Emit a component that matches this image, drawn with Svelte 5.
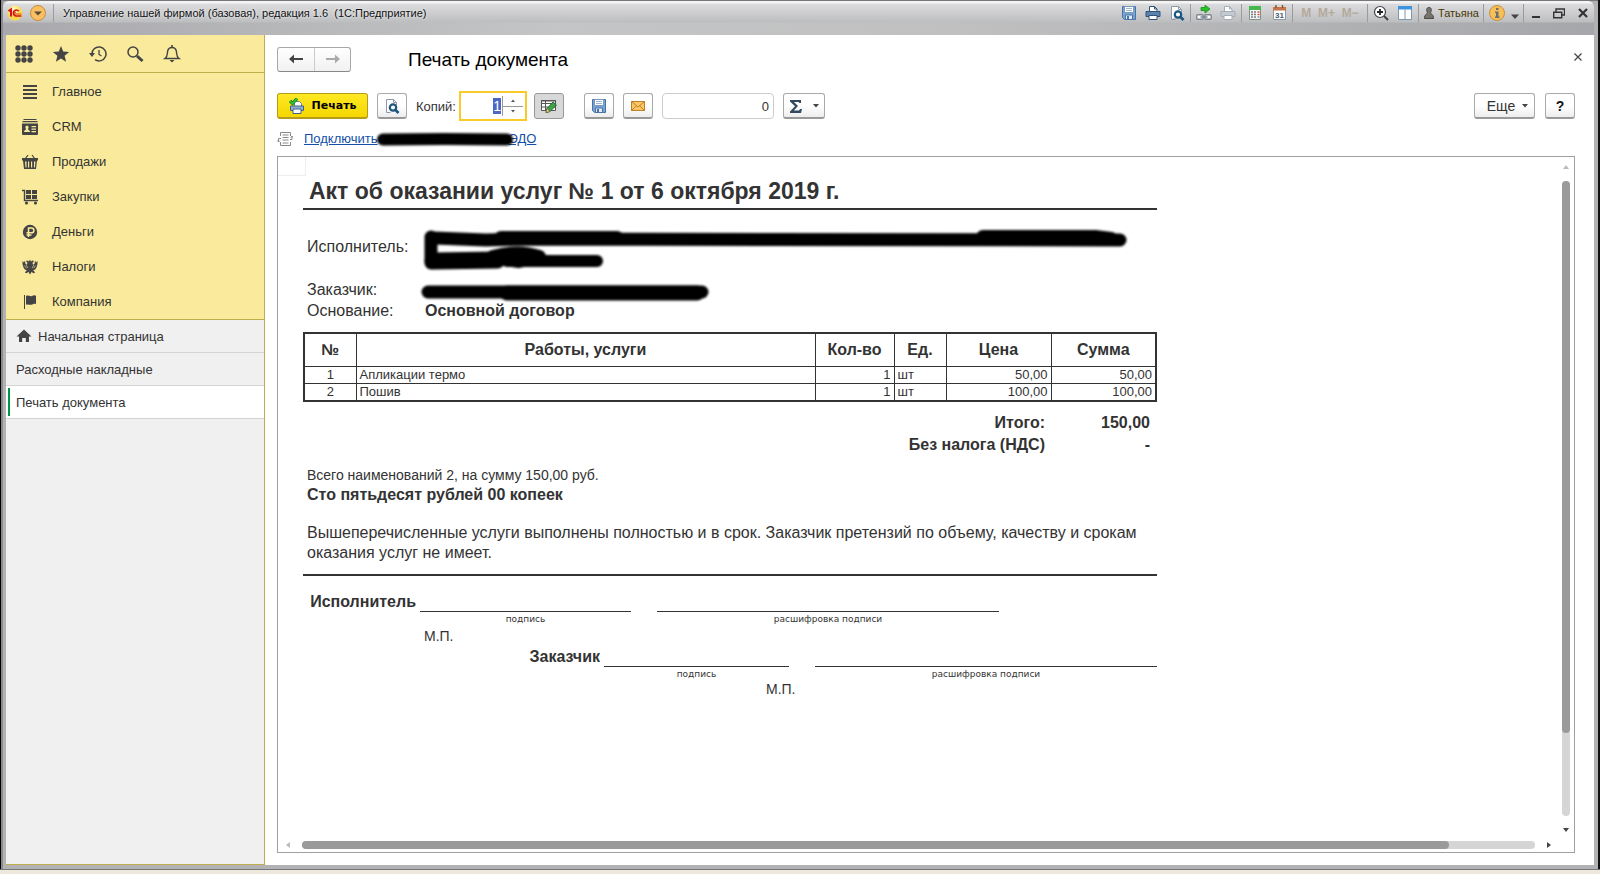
<script>
	import { onMount } from 'svelte';

	let copies = $state(1);
	let total = $state('0');
	let copiesInput;

	const sections = [
		{ id: 'main', label: 'Главное' },
		{ id: 'crm', label: 'CRM' },
		{ id: 'sales', label: 'Продажи' },
		{ id: 'purchases', label: 'Закупки' },
		{ id: 'money', label: 'Деньги' },
		{ id: 'taxes', label: 'Налоги' },
		{ id: 'company', label: 'Компания' }
	];

	const rows = [
		{ name: 'Апликации термо', qty: '1', unit: 'шт', price: '50,00', sum: '50,00' },
		{ name: 'Пошив', qty: '1', unit: 'шт', price: '100,00', sum: '100,00' }
	];

	onMount(() => {
		copiesInput.focus();
		copiesInput.select();
	});
</script>

{#snippet floppy()}
	<svg width="16" height="16" viewBox="0 0 16 16">
		<path d="M1.5 1.5h13v13h-11l-2-2z" fill="#7ba3cf" stroke="#4674a8" />
		<path d="M3.5 1.5h9v6h-9z" fill="#fff" stroke="#7598bd" />
		<path d="M5 3.5h6M5 5.5h6" stroke="#9fb4ca" />
		<path d="M4.5 10h7v4.5h-7z" fill="#e4edf6" stroke="#4674a8" />
		<path d="M6 11h2v3H6z" fill="#4674a8" />
	</svg>
{/snippet}

{#snippet preview()}
	<svg width="16" height="16" viewBox="0 0 16 16">
		<path d="M2.5 14.5v-13h7l3 3v3M2.5 14.5h4" fill="#fff" stroke="#8a9aab" />
		<path d="M9.5 1.5v3h3" fill="none" stroke="#8a9aab" />
		<circle cx="9" cy="9.5" r="3.2" fill="#fff" stroke="#1c5580" stroke-width="2.2" />
		<path d="M11.5 12l3 3" stroke="#1c5580" stroke-width="2.6" />
	</svg>
{/snippet}

{#snippet printer(body, edge)}
	<svg width="16" height="16" viewBox="0 0 16 16">
		<path d="M4.5 7V1.5h5l2.500 2.500v3" fill="#fff" stroke={edge} />
		<path d="M9.5 1.5V4H12" fill="none" stroke={edge} />
		<path d="M1 6.5h14v5H1z" fill={body} stroke={edge} />
		<path d="M4 10.5h8v4H4z" fill="#fff" stroke={edge} />
	</svg>
{/snippet}

<div class="window">
	<header class="titlebar">
		<div class="caption">
			<svg width="16" height="16" viewBox="0 0 16 16">
				<defs>
					<radialGradient id="logoFill" cx="40%" cy="25%">
						<stop offset="0" stop-color="#fff9c8" />
						<stop offset="1" stop-color="#fbd94a" />
					</radialGradient>
				</defs>
				<circle cx="8" cy="8" r="7.5" fill="url(#logoFill)" />
				<path d="M1.5 6.200L4 4.500V11.500" fill="none" stroke="#d4151b" stroke-width="2" />
				<path d="M11.800 6.300A3 3 0 1 0 9 11H14.500" fill="none" stroke="#d4151b" stroke-width="1.600" />
				<path d="M9 7.200a1 1 0 1 0 0 1.800H14.500" fill="none" stroke="#d4151b" stroke-width=".8" />
			</svg>
			<button aria-label="Главное меню">
				<svg width="16" height="16" viewBox="0 0 16 16">
					<circle cx="8" cy="8" r="7.5" fill="#f9bf62" stroke="#c58d3c" />
					<path d="M4 6.5h8l-4 4z" fill="#5a4a35" />
				</svg>
			</button>
			<span class="divider"></span>
			<span class="caption-text">Управление нашей фирмой (базовая), редакция 1.6&nbsp; (1С:Предприятие)</span>
		</div>
		<div class="sys">
			<div class="group">
				<button aria-label="Сохранить">{@render floppy()}</button>
				<button aria-label="Печать">{@render printer('#5b83ad', '#2f5278')}</button>
				<button aria-label="Просмотр">{@render preview()}</button>
			</div>
			<div class="group">
				<button aria-label="Получить ссылку">
					<svg width="16" height="16" viewBox="0 0 16 16">
						<path d="M5 2.5h4V0l5 4-5 4V5.5H5z" fill="#25c425" stroke="#128212" stroke-width=".7" />
						<rect x=".8" y="9.8" width="6.4" height="4.4" rx="1" fill="#fff" stroke="#7d8790" stroke-width="1.4" />
						<rect x="8.8" y="9.8" width="6.4" height="4.4" rx="1" fill="#fff" stroke="#7d8790" stroke-width="1.4" />
						<path d="M4.5 12h7" stroke="#7d8790" stroke-width="1.5" />
					</svg>
				</button>
				<button aria-label="Перейти по ссылке">{@render printer('#c3cad2', '#a3adb8')}</button>
			</div>
			<div class="group">
				<button aria-label="Калькулятор">
					<svg width="16" height="16" viewBox="0 0 16 16">
						<path d="M2.5 1.5h11v13h-11z" fill="#f6f8f6" stroke="#849084" />
						<path d="M2 1h12v4H2z" fill="#45b84d" />
						<path d="M4 7h2M7 7h2M4 9.5h2M7 9.5h2M4 12h2M7 12h2" stroke="#778" stroke-width="1.3" />
						<path d="M10.5 7h2M10.5 9.5h2" stroke="#e0483b" stroke-width="1.3" />
						<path d="M10.5 12h2" stroke="#778" stroke-width="1.3" />
					</svg>
				</button>
				<button aria-label="Календарь">
					<svg width="16" height="16" viewBox="0 0 16 16">
						<path d="M2.5 2.5h12v12h-12z" fill="#fff" stroke="#8b98a6" />
						<path d="M2 2h13v3.5H2z" fill="#c4764a" />
						<path d="M5 0v3M11.5 0v3" stroke="#8c4b28" stroke-width="1.4" />
						<text x="4" y="13" font-size="8" font-family="Liberation Sans, sans-serif" font-weight="bold" fill="#4b5968">31</text>
					</svg>
				</button>
			</div>
			<div class="group memory">
				<button disabled>M</button>
				<button disabled>M+</button>
				<button disabled>M−</button>
			</div>
			<div class="group">
				<button aria-label="Масштаб">
					<svg width="16" height="16" viewBox="0 0 16 16">
						<circle cx="7" cy="7" r="5.5" fill="#fff" stroke="#3d4247" stroke-width="1.2" />
						<path d="M7 4v6M4 7h6" stroke="#22262a" stroke-width="1.8" />
						<path d="M11 11l4 4" stroke="#3d4247" stroke-width="2" />
					</svg>
				</button>
				<button aria-label="Панели">
					<svg width="16" height="16" viewBox="0 0 16 16">
						<path d="M1.5 1.5h13v13h-13z" fill="#fff" stroke="#7f98ae" />
						<path d="M1 1h14v3.5H1z" fill="#3f95dd" />
						<path d="M8 4.5V14" stroke="#7f98ae" />
					</svg>
				</button>
			</div>
			<div class="group user">
				<svg width="10" height="12" viewBox="0 0 10 12">
					<path d="M5 .5c3 0 2.600 3.500 1.500 5.200C6.800 7.200 9.500 7 9.500 11.500h-9C.5 7 3.200 7.200 3.500 5.700 2.400 4 2 .5 5 .5z" fill="#77736f" stroke="#4b4845" />
				</svg>
				<span>Татьяна</span>
			</div>
			<div class="group info">
				<button aria-label="О программе">
					<svg width="16" height="16" viewBox="0 0 16 16">
						<circle cx="8" cy="8" r="7.5" fill="#f7bf56" stroke="#c69239" />
						<path d="M7 3h2.500v2H7zM6 6.500h3.500v5h1V13H6v-1.500h1V8H6z" fill="#6b7076" />
					</svg>
				</button>
				<button aria-label="Дополнительно">
					<svg width="8" height="16" viewBox="0 0 8 16"><path d="M0 9.500h8l-4 4.500z" fill="#444" /></svg>
				</button>
			</div>
			<div class="group controls">
				<button aria-label="Свернуть">
					<svg width="8" height="12" viewBox="0 0 8 12"><path d="M0 10h8" stroke="#333" stroke-width="2" /></svg>
				</button>
				<button aria-label="Восстановить">
					<svg width="12" height="12" viewBox="0 0 12 12">
						<path d="M3 5V2h8.500v6H9" fill="none" stroke="#333" stroke-width="1.4" />
						<path d="M.7 5.200h8v5.500h-8z" fill="none" stroke="#333" stroke-width="1.4" />
					</svg>
				</button>
				<button aria-label="Закрыть">
					<svg width="10" height="12" viewBox="0 0 10 12"><path d="M1 2l8 8M9 2l-8 8" stroke="#333" stroke-width="2.2" /></svg>
				</button>
			</div>
		</div>
	</header>

	<div class="workspace">
		<aside class="sidebar">
			<div class="quick">
				<button aria-label="Меню функций">
					<svg width="18" height="18" viewBox="0 0 18 18" fill="#444">
						{#each [3, 9, 15] as y}
							{#each [3, 9, 15] as x}
								<circle cx={x} cy={y} r="2.7" />
							{/each}
						{/each}
					</svg>
				</button>
				<button aria-label="Избранное">
					<svg width="18" height="18" viewBox="0 0 18 18"><path d="M9 1l2.200 5.600 6 .4-4.600 3.800 1.500 5.900L9 13.400l-5.100 3.300 1.500-5.900L.8 7l6-.4z" fill="#444" /></svg>
				</button>
				<button aria-label="История">
					<svg width="18" height="18" viewBox="0 0 18 18">
						<path d="M3 9.500A7 7 0 1 1 6 14.700" fill="none" stroke="#444" stroke-width="1.5" />
						<path d="M0 8h6l-3 4z" fill="#444" />
						<path d="M10 5v4.500l2.500 1.500" fill="none" stroke="#444" stroke-width="1.3" />
					</svg>
				</button>
				<button aria-label="Поиск">
					<svg width="18" height="18" viewBox="0 0 18 18">
						<circle cx="7" cy="7" r="5" fill="none" stroke="#444" stroke-width="1.5" />
						<path d="M11 11l5.500 5" stroke="#444" stroke-width="3" />
					</svg>
				</button>
				<button aria-label="Оповещения">
					<svg width="18" height="18" viewBox="0 0 18 18">
						<path d="M2 13.500c3-2 2-5 2.800-8C5.500 3 7.500 2.500 9 2.500s3.500.5 4.200 3c.8 3-.2 6 2.800 8z" fill="none" stroke="#444" stroke-width="1.4" />
						<path d="M9 0v3" stroke="#444" stroke-width="1.6" />
						<path d="M6.500 15h5L9 17.500z" fill="#444" />
					</svg>
				</button>
			</div>

			<nav class="sections">
				{#each sections as section}
					<a href="#{section.id}">
						<svg width="18" height="18" viewBox="0 0 18 18" fill="#444">
							{#if section.id === 'main'}
								<path d="M2 2h14v2H2zM2 6h14v2H2zM2 10h14v2H2zM2 14h14v2H2z" />
							{:else if section.id === 'crm'}
								<path d="M2.500 1h13v1h-13zM1.500 3h15v1.200h-15z" />
								<path fill-rule="evenodd" d="M1 5.500h16V16q0 1-1 1H2q-1 0-1-1zM3 14h6c0-2-2-1.800-2-3 1-1.200.8-3.500-1-3.500S4 9.800 5 11c0 1.200-2 1-2 3zM10.500 8v1.300H15V8zM10.500 10.500v1.300H15v-1.300zM10.500 13v1.200H15V13z" />
							{:else if section.id === 'sales'}
								<path d="M4 6l3-4M14 6l-3-4" fill="none" stroke="#444" stroke-width="1.2" />
								<path fill-rule="evenodd" d="M1 5h16v2.500h-1L15 16H3L2 7.500H1zM4 8.500l.5 6h1v-6zM7 8.500v6h1.200v-6zM10 8.500v6h1.200v-6zM13 8.500v6h1l.4-6z" />
							{:else if section.id === 'purchases'}
								<path d="M1 2.500h2.500v10H17" fill="none" stroke="#444" stroke-width="1.4" />
								<path d="M5 2h5v4H5zM11 2h5v4h-5zM5 7h5v4H5zM11 7h5v4h-5z" />
								<circle cx="5.5" cy="15" r="1.6" /><circle cx="14.5" cy="15" r="1.6" />
							{:else if section.id === 'money'}
								<circle cx="9" cy="9" r="7.2" />
								<path d="M7.500 14V5h3a2.300 2.300 0 0 1 0 4.800H5.500M5.500 12h5" fill="none" stroke="#faeb9c" stroke-width="1.5" />
							{:else if section.id === 'taxes'}
								<path d="M9 1.500l1 2 2-1.200.8 1.500-1.300 1 .5 2L13.500 6l.5-3.500 1 2L16.500 3v3l-.8 3-1.500 2.500-2 .8 2 2.200-2 .8-1.500-1.500L9 16.500l-1.700-2.700-1.500 1.500-2-.8 2-2.200-2-.8L2.300 9l-.8-3V3L3 4.500l1-2L4.500 6 6 6.800l.5-2-1.300-1L6 2.300l2 1.200z" />
								<path d="M5 7l2 3M13 7l-2 3M3.300 7.500l2.200 2.800M14.700 7.500l-2.200 2.800" stroke="#faeb9c" stroke-width=".6" />
							{:else}
								<path d="M3 2h1v14H3z" />
								<path d="M5 3c2-1.500 4 .8 6 0 1.500-1 3-.6 4-.2v8.400c-2-1-3 .2-4.500.6-2 .4-3.500-1-5.500 0z" />
							{/if}
						</svg>
						{section.label}
					</a>
				{/each}
			</nav>

			<nav class="opened">
				<a href="#home">
					<svg width="16" height="16" viewBox="0 0 16 16"><path d="M8 1.500l7.500 7H13V14H9.800v-4H6.200v4H3V8.500H.5z" fill="#444" /></svg>
					Начальная страница
				</a>
				<a href="#invoices">Расходные накладные</a>
				<a href="#print" class="active">Печать документа</a>
			</nav>
		</aside>

		<main class="page">
			<div class="head">
				<div class="history">
					<button aria-label="Назад">
						<svg width="16" height="12" viewBox="0 0 16 12"><path d="M1 6l5-4.500V5h9v2H6v3.500z" fill="#444" /></svg>
					</button>
					<button aria-label="Вперед">
						<svg width="16" height="12" viewBox="0 0 16 12"><path d="M15 6l-5-4.500V5H1v2h9v3.500z" fill="#aaa" /></svg>
					</button>
				</div>
				<h1>Печать документа</h1>
				<button class="close" aria-label="Закрыть">
					<svg width="8" height="8" viewBox="0 0 8 8"><path d="M.5.5l7 7M7.500.5l-7 7" stroke="#444" stroke-width="1.2" /></svg>
				</button>
			</div>

			<div class="toolbar">
				<button class="btn primary">
					<svg width="16" height="16" viewBox="0 0 16 16">
						<path d="M5.500 8V3.500h5l2 2V8" fill="#fff" stroke="#6d8296" />
						<path d="M1.500 8h13v4.500h-13z" fill="#8fb0d0" stroke="#3f6288" />
						<path d="M4 11h8v4.500H4z" fill="#fff" stroke="#3f6288" />
						<path d="M1 3l2.500 2.500L8 .5" fill="none" stroke="#16831a" stroke-width="3.2" />
						<path d="M1 3l2.500 2.500L8 .5" fill="none" stroke="#35c43a" stroke-width="1.6" />
					</svg>
					Печать
				</button>
				<button class="btn icon" aria-label="Предварительный просмотр">{@render preview()}</button>
				<label for="copies">Копий:</label>
				<div class="spin">
					<input id="copies" type="number" bind:value={copies} bind:this={copiesInput} />
					<div class="steps">
						<button aria-label="Больше" onclick={() => copies++}>
							<svg width="4" height="3" viewBox="0 0 4 3"><path d="M0 3h4L2 .5z" fill="#555" /></svg>
						</button>
						<button aria-label="Меньше" onclick={() => copies--}>
							<svg width="4" height="3" viewBox="0 0 4 3"><path d="M0 0h4L2 2.500z" fill="#555" /></svg>
						</button>
					</div>
				</div>
				<button class="btn icon pressed" aria-label="Редактирование">
					<svg width="18" height="16" viewBox="0 0 18 16">
						<path d="M1.500 2.500h14v10h-14z" fill="#fff" stroke="#555" />
						<path d="M1 5.500h15M1 9h15M5.500 2v10.500" stroke="#555" />
						<path d="M1 2h15v1.500H1z" fill="#555" />
						<path d="M6 14.500l1-4 6-6.500 3.500 3-6.500 6.500z" fill="#43a047" stroke="#1f6f2a" />
						<path d="M6 14.500l1-4 3 3z" fill="#f4d9a8" stroke="#6d5a35" stroke-width=".7" />
					</svg>
				</button>
				<button class="btn icon spaced" aria-label="Сохранить">{@render floppy()}</button>
				<button class="btn icon" aria-label="Отправить">
					<svg width="16" height="16" viewBox="0 0 16 16">
						<path d="M1.500 3.500h13v9h-13z" fill="#fbc766" stroke="#c17f26" />
						<path d="M1.500 3.500L8 9l6.500-5.500M1.500 12.500l5-4.800M14.500 12.500l-5-4.800" fill="none" stroke="#c17f26" />
					</svg>
				</button>
				<input class="total" aria-label="Сумма" bind:value={total} />
				<button class="btn sigma" aria-label="Сумма">
					<svg width="14" height="14" viewBox="0 0 14 14"><path d="M1 1h11v3h-1.500L9.500 3H5l4 4-4.200 4.500H10l1.200-1.500H13L12 14H1v-1.500L6 7.300 1 2.500z" fill="#34495e" /></svg>
					<svg width="6" height="4" viewBox="0 0 6 4"><path d="M0 0h6L3 3.500z" fill="#444" /></svg>
				</button>
				<button class="btn more">
					Еще
					<svg width="6" height="4" viewBox="0 0 6 4"><path d="M0 0h6L3 3.500z" fill="#444" /></svg>
				</button>
				<button class="btn icon help">?</button>
			</div>

			<div class="edo">
				<svg width="16" height="16" viewBox="0 0 16 16" fill="none" stroke="#8a8a8a">
					<path d="M3.500 5V1.500h10V5M3.500 11v3.500h10V11" />
					<path d="M5.500 4h6M5.500 6.500h6M5.500 9h6M5.500 12h6" />
					<path d="M4 7.500H1.500V11M.2 9.500L1.500 11 3 9.500M13 8.500h2V5M13.700 6.500L15 5l1 1.500" />
				</svg>
				<a href="#edo">Подключить<svg class="mark" width="138" height="14" viewBox="0 0 138 14">
					<path d="M7 7.500q62-1 124 0" fill="none" stroke="#000" stroke-width="12" stroke-linecap="round" />
				</svg>ЭДО</a>
			</div>

			<div class="viewer">
				<div class="canvas">
					<div class="cell"></div>
					<article class="sheet">
						<h2>Акт об оказании услуг № 1 от 6 октября 2019 г.</h2>

						<dl>
							<dt class="tall">Исполнитель:</dt>
							<dd></dd>
							<dt>Заказчик:</dt>
							<dd></dd>
							<dt>Основание:</dt>
							<dd>Основной договор</dd>
							<svg class="ink" width="720" height="84" viewBox="0 0 720 84" aria-hidden="true">
								<g fill="none" stroke="#000" stroke-linecap="round" stroke-linejoin="round">
									<path d="M17 18l52 2 40-1 594 1" stroke-width="13" />
									<path d="M84 18h116M566 17h112l16 2" stroke-width="14" />
									<path d="M14 17v26" stroke-width="13" />
									<path d="M16 41l64-1" stroke-width="17" />
									<path d="M76 37q25-7 46 0l-20 4z" stroke-width="14" fill="#000" />
									<path d="M90 41h90" stroke-width="12" />
									<path d="M11 72h274" stroke-width="13" />
									<path d="M90 73h190" stroke-width="15" />
								</g>
							</svg>
						</dl>

						<table>
							<thead>
								<tr>
									<th class="num">№</th>
									<th>Работы, услуги</th>
									<th class="qty">Кол-во</th>
									<th class="unit">Ед.</th>
									<th class="money">Цена</th>
									<th class="money">Сумма</th>
								</tr>
							</thead>
							<tbody>
								{#each rows as row, i}
									<tr>
										<td class="center">{i + 1}</td>
										<td>{row.name}</td>
										<td class="right">{row.qty}</td>
										<td>{row.unit}</td>
										<td class="right">{row.price}</td>
										<td class="right">{row.sum}</td>
									</tr>
								{/each}
							</tbody>
						</table>

						<div class="totals">
							<span>Итого:</span><span>150,00</span>
							<span>Без налога (НДС)</span><span>-</span>
						</div>

						<p class="count">Всего наименований 2, на сумму 150,00 руб.</p>
						<p class="words">Сто пятьдесят рублей 00 копеек</p>
						<p class="claim">Вышеперечисленные услуги выполнены полностью и в срок. Заказчик претензий по объему, качеству и срокам оказания услуг не имеет.</p>

						<div class="sign">
							<strong>Исполнитель</strong>
							<div class="field">подпись</div>
							<div class="field name">расшифровка подписи</div>
							<span class="stamp">М.П.</span>
						</div>
						<div class="sign customer">
							<strong>Заказчик</strong>
							<div class="field">подпись</div>
							<div class="field name">расшифровка подписи</div>
							<span class="stamp">М.П.</span>
						</div>
					</article>
				</div>
				<div class="vbar">
					<svg width="8" height="6" viewBox="0 0 8 6"><path d="M1 5h6L4 1z" fill="#bbb" /></svg>
					<div class="track"><div class="thumb"></div></div>
					<svg width="8" height="6" viewBox="0 0 8 6"><path d="M1 1h6L4 5z" fill="#444" /></svg>
				</div>
				<div class="hbar">
					<svg width="6" height="8" viewBox="0 0 6 8"><path d="M5 1v6L1 4z" fill="#bbb" /></svg>
					<div class="track"><div class="thumb"></div></div>
					<svg width="6" height="8" viewBox="0 0 6 8"><path d="M1 1v6l4-3z" fill="#444" /></svg>
				</div>
			</div>
		</main>
	</div>
</div>

<style>
	:global(body) {
		background: #ece8dc;
	}

	.window {
		box-sizing: border-box;
		display: flex;
		flex-direction: column;
		min-height: calc(100vh - 4px);
		padding: 1px 6px 4px 6px;
		font-family: 'Liberation Sans', Arial, sans-serif;
		font-size: 13px;
		color: #333;
		background: #b2b2b5;
		border-bottom: 1px solid #77777a;
		box-shadow: inset 1px 0 #000, inset -2px 0 #111, inset 3px 0 #8b8b8e, inset 0 1px #777;
	}

	button {
		display: flex;
		align-items: center;
		justify-content: center;
		margin: 0;
		padding: 0;
		border: 0;
		background: none;
		font: inherit;
		color: inherit;
	}

	svg {
		display: block;
		flex: none;
	}

	a {
		color: inherit;
		text-decoration: none;
	}

	/* Title bar */
	.titlebar {
		display: flex;
		justify-content: space-between;
		height: 34px;
		margin-left: -3px;
		border-radius: 6px 6px 0 0;
		background:
			linear-gradient(#f4f4f4 0 2px, #dcdcde 3px, #bdbec0 21px, transparent 22px),
			linear-gradient(90deg, #a9a9ad, #c4c5c6 35%, #c0c0c1 60%, #a6a7aa);
		color: #111;
		font-size: 11px;
	}

	.caption,
	.sys {
		display: flex;
		align-items: center;
		height: 24px;
	}

	.caption {
		gap: 7px;
		padding-left: 4px;
	}

	.divider {
		width: 1px;
		height: 18px;
		background: #9b9b9d;
	}

	.caption-text {
		margin-left: 2px;
		white-space: pre;
		text-shadow: 0 0 3px #fff;
	}

	.group {
		box-sizing: border-box;
		display: flex;
		align-items: center;
		gap: 8px;
		height: 18px;
		padding: 0 5px;
		border-left: 1px solid #9b9b9d;
	}

	.group:first-child {
		border-left: 0;
	}

	.memory {
		width: 75px;
		justify-content: space-around;
		gap: 0;
		font-size: 12px;
		font-weight: bold;
	}

	.memory button {
		color: #b5a99d;
	}

	.user {
		gap: 4px;
		padding-right: 4px;
		color: #4a3600;
	}

	.info {
		gap: 6px;
		padding-right: 4px;
	}

	.controls {
		gap: 13px;
		padding: 0 6px 0 8px;
	}

	.workspace {
		display: flex;
		flex: 1;
		background: #fff;
	}

	/* Sidebar */
	.sidebar {
		box-sizing: border-box;
		flex: none;
		width: 259px;
		background: #f0f0f0;
		border-right: 1px solid #bfae4e;
		border-bottom: 1px solid #bfae4e;
	}

	.quick {
		display: flex;
		gap: 9px;
		height: 37px;
		padding-left: 4px;
		background: #faeb9c;
		border-bottom: 1px solid #bfae4e;
	}

	.quick button {
		width: 28px;
	}

	.sections {
		background: #faeb9c;
		border-bottom: 1px solid #bfae4e;
		padding-top: 1px;
	}

	.sections a {
		display: flex;
		align-items: center;
		gap: 13px;
		height: 35px;
		padding-left: 15px;
	}

	.opened a {
		display: flex;
		align-items: center;
		gap: 6px;
		height: 32px;
		padding-left: 10px;
		border-bottom: 1px solid #d4d4d4;
	}

	.opened .active {
		background:
			linear-gradient(#009646, #009646) 2px 2px / 2px 28px no-repeat,
			#fff;
	}

	/* Page */
	.page {
		display: flex;
		flex: 1;
		flex-direction: column;
		min-width: 0;
		padding: 12px 19px 12px 12px;
	}

	.head {
		display: flex;
		align-items: center;
		height: 24px;
	}

	.history {
		display: flex;
		box-sizing: border-box;
		height: 25px;
		border: 1px solid #a8a8a8;
		border-bottom-color: #888;
		border-radius: 3px;
		background: linear-gradient(#fff, #f1f1f1);
	}

	.history button {
		width: 36px;
	}

	.history button + button {
		border-left: 1px solid #ccc;
	}

	h1 {
		flex: 1;
		margin: 0 0 0 57px;
		padding-top: 2px;
		font-size: 19px;
		font-weight: normal;
		color: #000;
	}

	.close {
		width: 8px;
		margin: -4px -7px 0 0;
	}

	.toolbar {
		display: flex;
		align-items: center;
		gap: 9px;
		height: 30px;
		margin-top: 20px;
	}

	.btn {
		box-sizing: border-box;
		height: 26px;
		border: 1px solid #aaa;
		border-bottom: 2px solid #999;
		border-radius: 3px;
		background: linear-gradient(#fff 50%, #ededed);
	}

	.icon {
		width: 30px;
	}

	.primary {
		gap: 7px;
		width: 91px;
		border-color: #b69c1a;
		background: linear-gradient(#ffe924, #f5d700);
		font-family: 'DejaVu Sans', Verdana, sans-serif;
		font-size: 11px;
		font-weight: bold;
		color: #000;
	}

	.pressed {
		border-width: 1px;
		border-color: #999;
		background: #d8d8d8;
	}

	.toolbar label {
		width: 34px;
		white-space: nowrap;
	}

	.spin {
		box-sizing: border-box;
		display: flex;
		width: 68px;
		height: 30px;
		border: 2px solid #f9cb29;
	}

	.spin input {
		flex: 1;
		min-width: 0;
		margin: 4px 0;
		padding: 0;
		border: 0;
		outline: 0;
		font: 14px 'Liberation Sans', Arial, sans-serif;
		text-align: right;
		appearance: textfield;
	}

	.spin input::-webkit-inner-spin-button {
		display: none;
	}

	.spin input::selection {
		background: #4b66c4;
		color: #fff;
	}

	.steps {
		display: flex;
		flex-direction: column;
		width: 20px;
		margin: 3px 2px 3px 1px;
		border-left: 1px solid #999;
	}

	.steps button {
		flex: 1;
	}

	.steps button + button {
		border-top: 1px solid #999;
	}

	.pressed {
		margin-left: -2px;
	}

	.spaced {
		margin-left: 11px;
	}

	.total {
		box-sizing: border-box;
		width: 112px;
		height: 26px;
		padding: 0 4px;
		border: 1px solid #ccc;
		border-radius: 4px;
		font: inherit;
		color: #333;
		text-align: right;
	}

	.sigma {
		gap: 10px;
		width: 42px;
	}

	.more {
		gap: 7px;
		width: 61px;
		margin-left: auto;
		padding-left: 6px;
		font-size: 14px;
	}

	.help {
		margin-left: 1px;
		font-size: 14px;
		font-weight: bold;
		color: #111;
	}

	.edo {
		display: flex;
		align-items: center;
		gap: 11px;
		height: 35px;
	}

	.edo a {
		color: #1450a8;
		text-decoration: underline;
		white-space: nowrap;
	}

	.mark {
		display: inline-block;
		margin: 0 -5px 0 -2px;
		vertical-align: -3px;
		filter: blur(1px);
	}

	/* Document viewer */
	.viewer {
		display: grid;
		flex: 1;
		grid-template-columns: 1fr 14px;
		grid-template-rows: 1fr 14px;
		border: 1px solid #a0a0a0;
	}

	.canvas {
		min-width: 0;
	}

	.cell {
		width: 27px;
		height: 18px;
		border: solid #eee;
		border-width: 0 1px 1px 0;
	}

	.sheet {
		width: 854px;
		margin-left: 25px;
	}

	h2 {
		margin: 0;
		padding: 1px 0 2px 6px;
		border-bottom: 2px solid #333;
		font-size: 23px;
		line-height: 29px;
	}

	dl {
		position: relative;
		display: grid;
		grid-template-columns: 118px 1fr;
		grid-template-rows: 59px 20px 20px;
		row-gap: 1px;
		align-items: center;
		margin: 10px 0 11px;
		padding-left: 4px;
		font-size: 16px;
	}

	.tall {
		padding-bottom: 5px;
	}

	dd {
		margin: 0;
		font-weight: bold;
	}

	.ink {
		position: absolute;
		top: 0;
		left: 114px;
		filter: blur(1px);
	}

	table {
		width: 100%;
		border: 2px solid #333;
		border-collapse: collapse;
		table-layout: fixed;
		font-size: 13px;
	}

	th,
	td {
		box-sizing: border-box;
		height: 17px;
		padding: 0 3px;
		border: 1px solid #333;
		line-height: 16px;
	}

	th {
		height: 33px;
		font-size: 16px;
	}

	.num {
		width: 52px;
	}

	.qty {
		width: 79px;
	}

	.unit {
		width: 52px;
	}

	.money {
		width: 105px;
	}

	.center {
		text-align: center;
	}

	.right {
		text-align: right;
	}

	.totals {
		display: grid;
		grid-template-columns: 1fr 105px;
		margin-top: 10px;
		padding-right: 7px;
		font-size: 16px;
		font-weight: bold;
		line-height: 22px;
		text-align: right;
	}

	p {
		margin: 0;
		padding-left: 4px;
		line-height: 20px;
	}

	.count {
		margin-top: 9px;
		font-size: 14px;
	}

	.words {
		font-size: 16px;
		font-weight: bold;
	}

	.claim {
		padding: 18px 8px 11px 4px;
		border-bottom: 2px solid #333;
		font-size: 16px;
	}

	.sign {
		display: grid;
		grid-template-columns: 117px 211px 26px 342px;
		grid-template-rows: 23px 14px 18px;
		margin-top: 13px;
		font-size: 16px;
	}

	.sign strong {
		grid-row: 1;
		grid-column: 1;
		padding: 4px 4px 0 0;
		text-align: right;
		line-height: 18px;
	}

	.field {
		grid-row: 1 / 3;
		grid-column: 2;
		margin-top: 22px;
		border-top: 1px solid #333;
		font-family: 'DejaVu Sans', Verdana, sans-serif;
		font-size: 9px;
		line-height: 14px;
		text-align: center;
	}

	.name {
		grid-column: 4;
	}

	.stamp {
		grid-row: 3;
		grid-column: 2;
		padding-left: 4px;
		font-size: 14px;
		line-height: 20px;
	}

	.customer {
		grid-template-columns: 301px 185px 26px 342px;
		margin-top: 0;
	}

	.customer .stamp {
		grid-column: 2 / 4;
		padding-left: 162px;
		line-height: 16px;
	}

	/* Scroll bars */
	.vbar,
	.hbar {
		display: flex;
		align-items: center;
		gap: 11px;
	}

	.vbar {
		flex-direction: column;
		padding: 7px 2px 5px 0;
	}

	.hbar {
		padding: 0 8px 0 7px;
	}

	.track {
		flex: 1;
		border-radius: 4px;
		background: #d5d5d5;
	}

	.thumb {
		border-radius: 4px;
		background: #9a9a9a;
	}

	.vbar .track,
	.vbar .thumb {
		width: 8px;
	}

	.vbar .thumb {
		height: 87%;
	}

	.hbar .thumb {
		width: 93%;
		height: 8px;
	}
</style>
